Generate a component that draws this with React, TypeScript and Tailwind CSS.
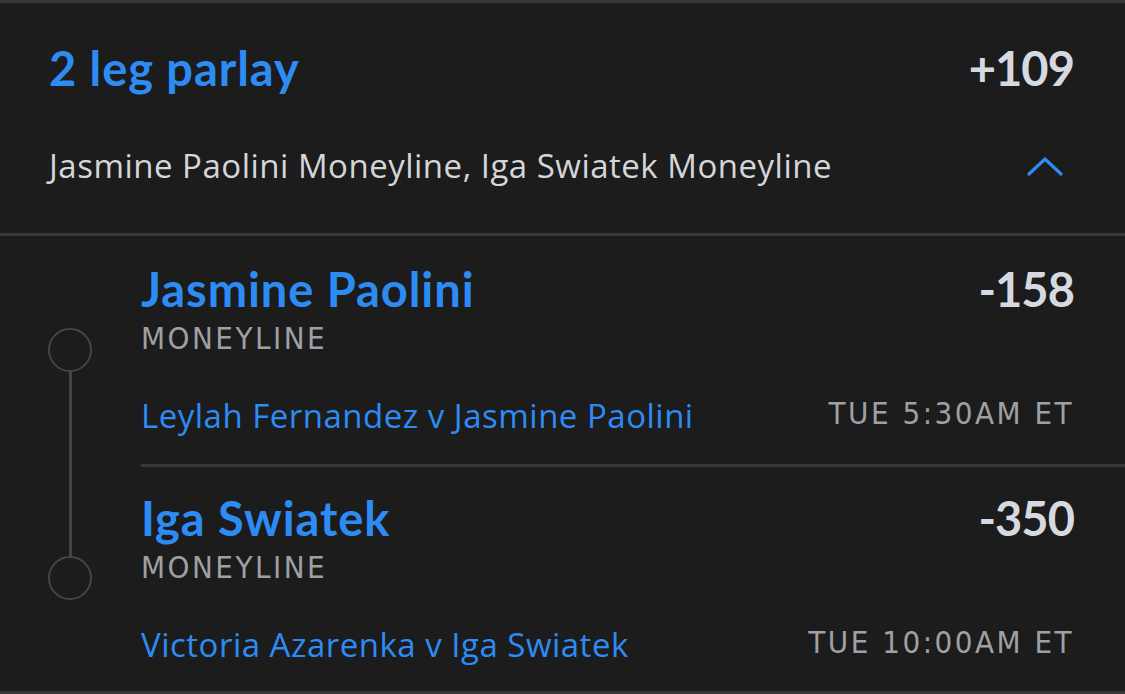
const BLUE = "text-[#2d8cf4]";

const legs = [
  {
    name: "Jasmine Paolini",
    odds: "-158",
    market: "MONEYLINE",
    match: "Leylah Fernandez v Jasmine Paolini",
    time: "TUE 5:30AM ET",
  },
  {
    name: "Iga Swiatek",
    odds: "-350",
    market: "MONEYLINE",
    match: "Victoria Azarenka v Iga Swiatek",
    time: "TUE 10:00AM ET",
  },
];

function ChevronUp() {
  return (
    <svg width="36" height="22" viewBox="0 0 36 22" fill="none">
      <polyline
        points="2,19 18,4 34,19"
        stroke="#2d8cf4"
        strokeWidth="3.2"
        strokeLinecap="round"
        strokeLinejoin="round"
      />
    </svg>
  );
}

function Leg({ leg, index }: { leg: (typeof legs)[number]; index: number }) {
  const first = index === 0;
  return (
    <div className="flex flex-1">
      {/* timeline */}
      <div className="flex w-[141px] shrink-0 flex-col items-start">
        {first ? (
          <>
            <div className="h-[92px]" />
            <div className="ml-[48px] h-[44px] w-[44px] rounded-full border-[2.5px] border-[#454547]" />
            <div className="ml-[69px] w-[2.5px] flex-1 bg-[#454547]" />
          </>
        ) : (
          <>
            <div className="ml-[69px] h-[92px] w-[2.5px] bg-[#454547]" />
            <div className="ml-[48px] h-[44px] w-[44px] rounded-full border-[2.5px] border-[#454547]" />
          </>
        )}
      </div>

      {/* content */}
      <div
        className={
          "flex flex-1 flex-col pr-[51px] " +
          (first ? "pt-[25px]" : "border-t-[3px] border-[#38383a] pt-[23px]")
        }
      >
        <div className="flex items-start justify-between">
          <span className={`font-[Lato] text-[47px] font-bold leading-[56px] tracking-[0.02em] ${BLUE}`}>
            {leg.name}
          </span>
          <span className="font-[Lato] text-[47px] font-bold leading-[56px] tracking-[-0.02em] text-[#d6dae0]">
            {leg.odds}
          </span>
        </div>
        <div className="mt-[3px] font-['DejaVu_Sans_Condensed',Roboto,sans-serif] text-[31px] leading-[36px] tracking-[0.08em] text-[#9fa0a4]">
          {leg.market}
        </div>
        <div className="mt-[40px] flex items-start justify-between">
          <span className={`font-['Open_Sans',sans-serif] text-[33px] leading-[40px] tracking-[0.015em] ${BLUE}`}>
            {leg.match}
          </span>
          <span className="font-['DejaVu_Sans_Condensed',Roboto,sans-serif] text-[31px] leading-[34px] tracking-[0.08em] text-[#9fa0a4]">
            {leg.time}
          </span>
        </div>
      </div>
    </div>
  );
}

export default function App() {
  return (
    <div className="flex h-[694px] w-[1125px] flex-col overflow-hidden border-y-[3px] border-[#38383a] bg-[#1c1c1c]">
      <div className="shrink-0 border-b-[3px] border-[#38383a] pb-[47px] pl-[49px] pr-[51px] pt-[37px]">
        <div className="flex items-start justify-between">
          <span className={`font-[Lato] text-[47px] font-bold leading-[56px] tracking-[0.02em] ${BLUE}`}>
            2 leg parlay
          </span>
          <span className="font-[Lato] text-[47px] font-bold leading-[56px] tracking-[-0.02em] text-[#d6dae0]">
            +109
          </span>
        </div>
        <div className="mt-[50px] flex items-center justify-between">
          <span className="font-['Open_Sans',sans-serif] text-[33px] leading-[40px] tracking-[0.015em] text-[#d4d6da]">
            Jasmine Paolini Moneyline, Iga Swiatek Moneyline
          </span>
          <span className="mr-[11px] flex">
            <ChevronUp />
          </span>
        </div>
      </div>

      <div className="flex flex-1 flex-col">
        {legs.map((leg, i) => (
          <Leg key={leg.name} leg={leg} index={i} />
        ))}
      </div>
    </div>
  );
}
